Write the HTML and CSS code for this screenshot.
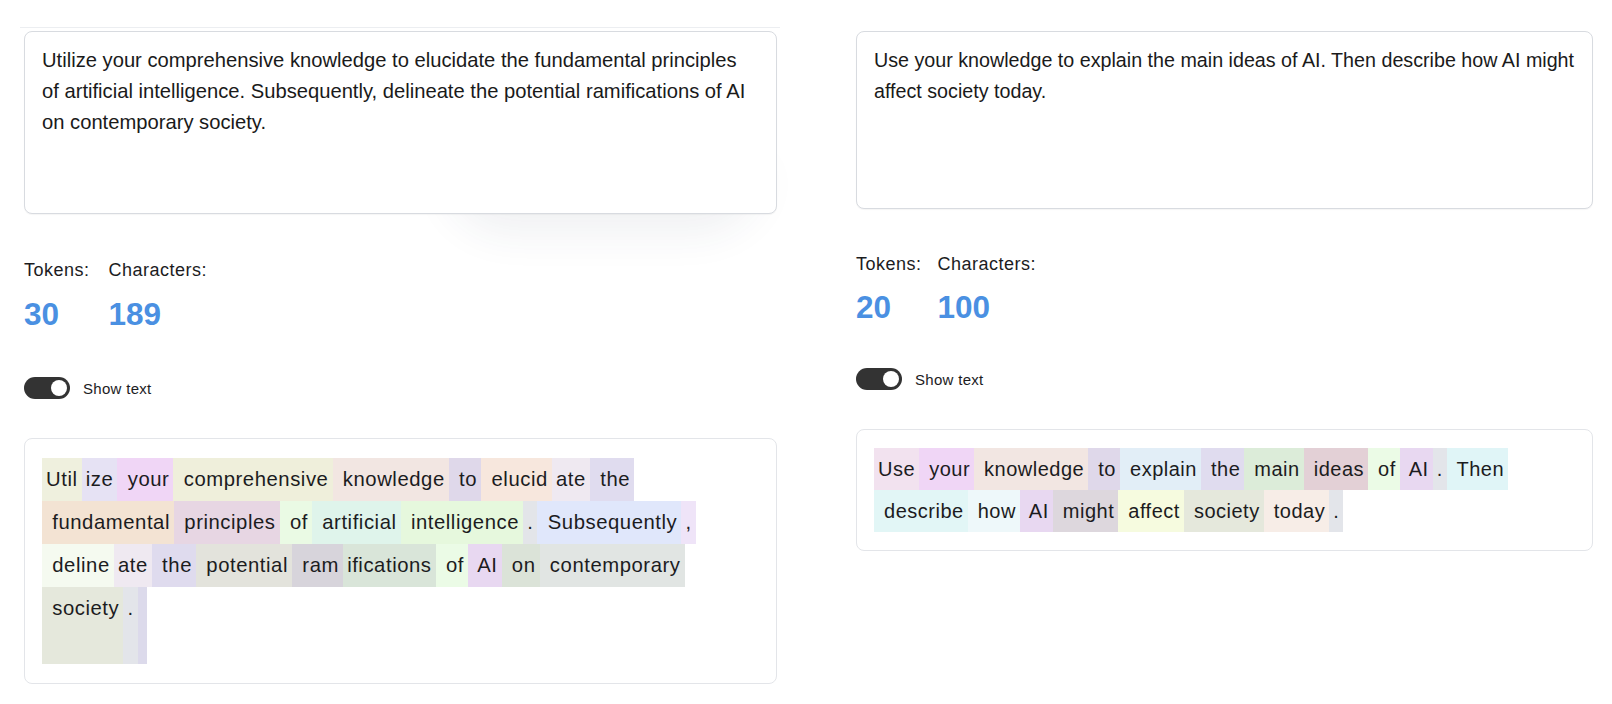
FILE: index.html
```html
<!DOCTYPE html>
<html lang="en">
<head>
<meta charset="utf-8">
<title>Tokenizer comparison</title>
<link rel="stylesheet" href="styles.css">
</head>
<body>
<div class="page">
  <section class="col col-left">
    <div class="rule"></div>
    <div class="prompt-wrap">
      <div class="prompt prompt-l">
        <div class="pline">Utilize your comprehensive knowledge to elucidate the fundamental principles</div>
        <div class="pline">of artificial intelligence. Subsequently, delineate the potential ramifications of AI</div>
        <div class="pline">on contemporary society.</div>
      </div>
    </div>
    <div class="stats stats-l">
      <div class="stat">
        <div class="stat-label">Tokens:</div>
        <div class="stat-value">30</div>
      </div>
      <div class="stat">
        <div class="stat-label">Characters:</div>
        <div class="stat-value">189</div>
      </div>
    </div>
    <div class="toggle-row toggle-l">
      <div class="switch"><span class="knob"></span></div>
      <span class="toggle-label">Show text</span>
    </div>
    <div class="tokens tokens-l">
      <div class="trow">
        <span class="tok" style="background:#eff0de">Util</span><span class="tok" style="background:#e6e2f4">ize</span><span class="tok" style="background:#f0d6f6"> your</span><span class="tok" style="background:#efefdb"> comprehensive</span><span class="tok" style="background:#f2e6e2"> knowledge</span><span class="tok" style="background:#dfd8ea"> to</span><span class="tok" style="background:#f7e7dd"> elucid</span><span class="tok" style="background:#efe9f1">ate</span><span class="tok" style="background:#e0dcef"> the</span>
      </div>
      <div class="trow">
        <span class="tok" style="background:#f3e3d3"> fundamental</span><span class="tok" style="background:#e7d6e3"> principles</span><span class="tok" style="background:#eafae4"> of</span><span class="tok" style="background:#dff4eb"> artificial</span><span class="tok" style="background:#e6f8dd"> intelligence</span><span class="tok" style="background:#e3e5e9">.</span><span class="tok" style="background:#e0e7fb"> Subsequently</span><span class="tok" style="background:#efe4f8">,</span>
      </div>
      <div class="trow">
        <span class="tok" style="background:#f5faf0"> deline</span><span class="tok" style="background:#efe9f1">ate</span><span class="tok" style="background:#dfdbee"> the</span><span class="tok" style="background:#e3e3dc"> potential</span><span class="tok" style="background:#d7d4db"> ram</span><span class="tok" style="background:#d9e5d9">ifications</span><span class="tok" style="background:#ebfbe6"> of</span><span class="tok" style="background:#e8d8f1"> AI</span><span class="tok" style="background:#dbe3d8"> on</span><span class="tok" style="background:#e1e5e3"> contemporary</span>
      </div>
      <div class="trow trow-last">
        <span class="tok" style="background:#e5e8dc"> society</span><span class="tok" style="background:#e3e5ea">.</span><span class="tok tok-empty" style="background:#dcdaeb"></span>
      </div>
    </div>
  </section>

  <section class="col col-right">
    <div class="prompt prompt-r">
      <div class="pline">Use your knowledge to explain the main ideas of AI. Then describe how AI might</div>
      <div class="pline">affect society today.</div>
    </div>
    <div class="stats stats-r">
      <div class="stat">
        <div class="stat-label">Tokens:</div>
        <div class="stat-value">20</div>
      </div>
      <div class="stat">
        <div class="stat-label">Characters:</div>
        <div class="stat-value">100</div>
      </div>
    </div>
    <div class="toggle-row toggle-r">
      <div class="switch"><span class="knob"></span></div>
      <span class="toggle-label">Show text</span>
    </div>
    <div class="tokens tokens-r">
      <div class="trow">
        <span class="tok" style="background:#f2e2ef">Use</span><span class="tok" style="background:#f0d6f6"> your</span><span class="tok" style="background:#f2e6e2"> knowledge</span><span class="tok" style="background:#dfd8ea"> to</span><span class="tok" style="background:#e2eef7"> explain</span><span class="tok" style="background:#e0dcef"> the</span><span class="tok" style="background:#dcecd9"> main</span><span class="tok" style="background:#e3d0d6"> ideas</span><span class="tok" style="background:#ebfbe6"> of</span><span class="tok" style="background:#e8d8f1"> AI</span><span class="tok" style="background:#e3e5ea">.</span><span class="tok" style="background:#e0f5f7"> Then</span>
      </div>
      <div class="trow">
        <span class="tok" style="background:#e2f6f6"> describe</span><span class="tok" style="background:#eef8fa"> how</span><span class="tok" style="background:#e8d8f1"> AI</span><span class="tok" style="background:#ddd7dd"> might</span><span class="tok" style="background:#f6fbdf"> affect</span><span class="tok" style="background:#e5e8dc"> society</span><span class="tok" style="background:#f7ede7"> today</span><span class="tok" style="background:#e3e5ea">.</span>
      </div>
    </div>
  </section>
</div>
</body>
</html>
```

FILE: styles.css
```css
* { box-sizing: border-box; }

html, body {
  margin: 0;
  background: #ffffff;
}

body {
  font-family: "Liberation Sans", Arial, sans-serif;
  color: #1c1c1e;
}

.page {
  display: flex;
  gap: 79px;
  padding-left: 24px;
}

.col-left { width: 753px; }
.col-right { width: 737px; padding-top: 31px; }

.rule {
  height: 1px;
  background: #eceef1;
  margin: 27px -3px 3px -4px;
}

.prompt-wrap {
  position: relative;
}

.prompt-wrap::before {
  content: "";
  position: absolute;
  left: 55%;
  right: 1%;
  top: 55%;
  bottom: 4px;
  border-radius: 0 0 80px 80px;
  box-shadow: 0 30px 42px -6px rgba(40, 50, 90, 0.07);
  z-index: 0;
}

.prompt {
  position: relative;
  z-index: 1;
  background: #ffffff;
  border: 1px solid #d8dbe0;
  border-radius: 8px;
  box-shadow: 0 1px 1px rgba(0, 0, 0, 0.04);
  padding: 13px 17px;
  line-height: 31px;
  color: #1a1a1a;
}

.pline { white-space: nowrap; }

.prompt-l { height: 183px; font-size: 20.2px; }
.prompt-r { height: 178px; font-size: 19.7px; }

.stats {
  display: flex;
}

.stats-l { margin-top: 44px; gap: 19px; }
.stats-r { margin-top: 43px; gap: 16px; }

.stat-label {
  font-size: 18px;
  line-height: 24px;
  letter-spacing: 0.5px;
  color: #1c1c1e;
}

.stat-value {
  font-size: 31.5px;
  font-weight: 700;
  line-height: 40px;
  color: #4a90e2;
  margin-top: 12px;
}

.stats-r .stat-value { margin-top: 11px; }

.toggle-row {
  display: flex;
  align-items: center;
  gap: 13px;
}

.toggle-l { margin-top: 43px; }
.toggle-r { margin-top: 41px; }

.switch {
  width: 46px;
  height: 22px;
  border-radius: 11px;
  background: #333333;
  display: flex;
  align-items: center;
  justify-content: flex-end;
  padding: 0 3px;
}

.knob {
  width: 16px;
  height: 16px;
  border-radius: 50%;
  background: #ffffff;
}

.toggle-label {
  font-size: 15px;
  letter-spacing: 0.3px;
  color: #1c1c1e;
}

.tokens {
  margin-top: 39px;
  border: 1px solid #e3e5e9;
  border-radius: 8px;
  padding: 19px 17px;
  background: #ffffff;
}

.trow {
  display: flex;
}

.tok {
  white-space: pre;
  padding: 0 4px;
  height: 43px;
  line-height: 43px;
  font-size: 20px;
  letter-spacing: 0.5px;
  color: #1c1c1e;
}

.tokens-l .tok {
  font-size: 20.3px;
  letter-spacing: 0.55px;
  padding: 0 4.1px;
}

.trow-last .tok { height: 77px; }

.tokens-l .tok-empty { width: 9px; padding: 0; }

.tokens-r { padding: 18px 17px; }
.tokens-r .tok { height: 42px; line-height: 42px; }
```
